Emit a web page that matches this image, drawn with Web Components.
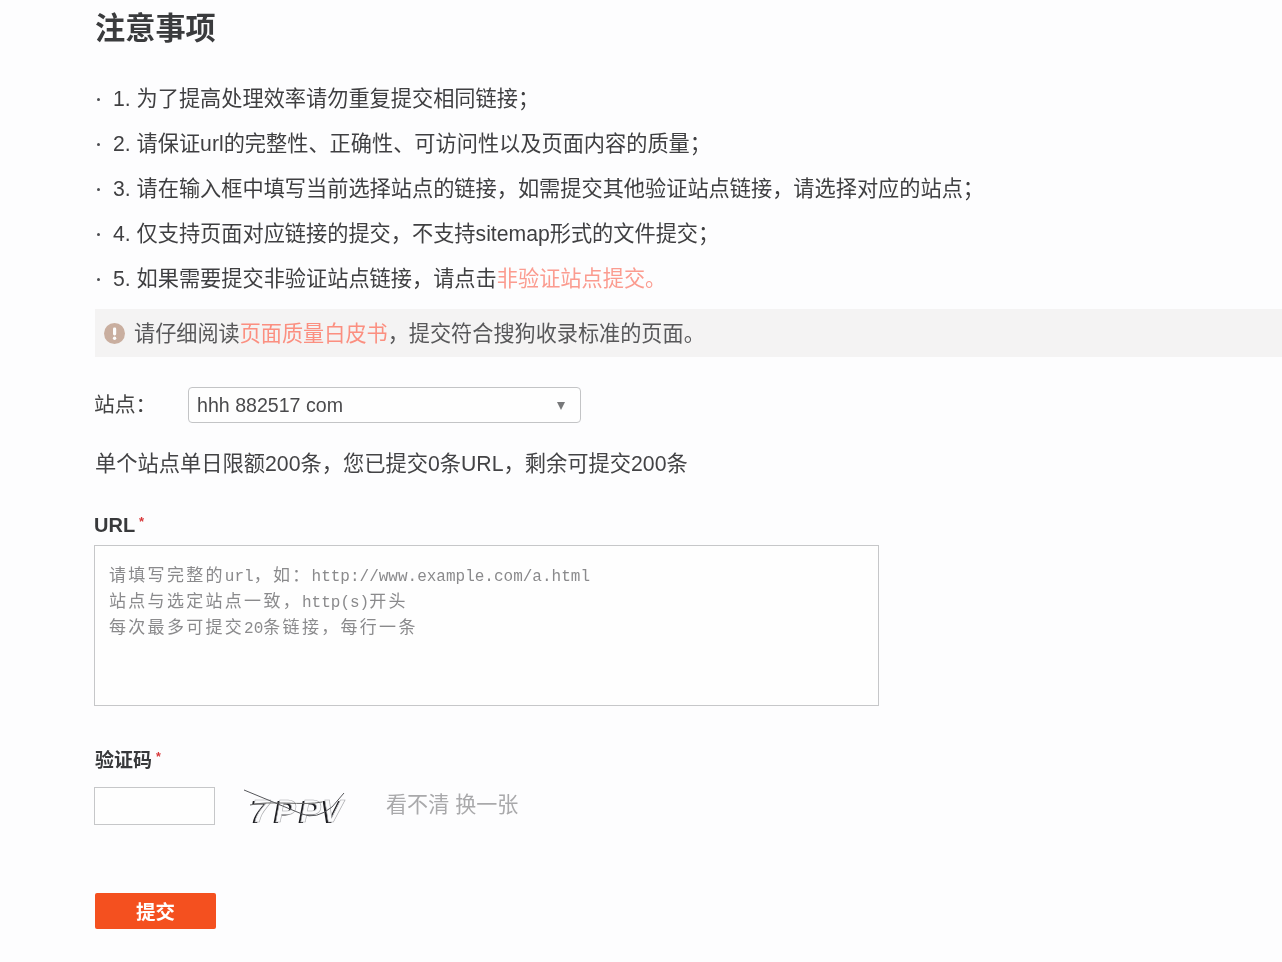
<!DOCTYPE html>
<html lang="zh-CN">
<head>
<meta charset="utf-8">
<title>注意事项</title>
<style>
html,body{margin:0;padding:0;background:#fdfdfe;}
body{font-family:"Liberation Sans","Noto Sans CJK SC",sans-serif;color:#3d3d3f;overflow:hidden;height:962px;}
</style>
</head>
<body>
<notice-page></notice-page>

<script>
function def(name, css, html){
  customElements.define(name, class extends HTMLElement{
    constructor(){
      super();
      this.attachShadow({mode:'open'}).innerHTML='<style>'+css+'</style>'+html;
    }
  });
}

def('notice-item',
 `:host{display:flex;align-items:center;height:45px;font-size:21.2px;color:#3f3f41;}
  .dot{width:3px;height:3px;border-radius:50%;background:#4c4d51;margin:5px 13px 0 2px;flex:none;}
  ::slotted(a){color:#fb9c90;text-decoration:none;}`,
 `<span class="dot"></span><span class="t"><slot></slot></span>`);

def('notice-alert',
 `:host{display:flex;align-items:center;height:48px;padding-left:9px;background:#f4f3f3;font-size:21.15px;color:#58585a;}
  svg{flex:none;margin-right:9px;}
  .t{padding-bottom:4px;}
  ::slotted(a){color:#fb8f80;text-decoration:none;}`,
 `<svg width="21" height="21" viewBox="0 0 21 21"><circle cx="10.5" cy="10.5" r="10.5" fill="#c9ae9f"/><rect x="9" y="4.5" width="3.2" height="8" rx="1.4" fill="#fdfdfd"/><circle cx="10.6" cy="15.3" r="1.7" fill="#fdfdfd"/></svg><span class="t"><slot></slot></span>`);

def('site-select',
 `:host{display:flex;align-items:center;height:36px;width:393px;box-sizing:border-box;padding:0 15px 0 8px;border:1px solid #c3c4c6;border-radius:4px;background:#fefefe;font-size:19.6px;color:#4a4a4c;justify-content:space-between;}
  i{width:0;height:0;border-left:4.5px solid transparent;border-right:4.5px solid transparent;border-top:8px solid #77787a;margin-top:2px;}`,
 `<span><slot></slot></span><i></i>`);

def('field-label',
 `:host{display:block;font-weight:700;color:#38393b;}
  b{color:#d8383a;font-size:.65em;position:relative;top:-6px;margin-left:4px;font-weight:700;}`,
 `<slot></slot><b>*</b>`);

def('url-box',
 `:host{display:block;width:785px;height:161px;box-sizing:border-box;border:1px solid #c6c7c9;background:#fefefe;padding:15px 14px;color:#8a8a8c;font-family:"Liberation Mono","Noto Sans CJK SC",monospace;font-size:16px;line-height:26px;white-space:nowrap;}`,
 `<slot></slot>`);

def('captcha-image',
 `:host{display:block;width:106px;height:48px;flex:none;align-self:flex-start;}
  svg{display:block;}`,
 `<svg width="106" height="48" viewBox="0 0 106 48" role="img" aria-label="captcha">
   <g font-family="Liberation Sans,sans-serif" font-style="italic" font-weight="700" font-size="31">
     <g fill="#1e1e22">
       <text x="6" y="36">7</text><text x="29" y="36">P</text><text x="54" y="36">P</text><text x="76" y="36">V</text>
     </g>
     <g fill="#fbfbfc" stroke="#a9aaad" stroke-width=".6" transform="translate(2.2,-.8)">
       <text x="6" y="36">7</text><text x="29" y="36">P</text><text x="54" y="36">P</text><text x="76" y="36">V</text>
     </g>
   </g>
   <path d="M0 3 L58 27 Q72 33 88 20 L100 6" fill="none" stroke="#55565a" stroke-width="1"/>
   <path d="M6 18 C26 13 60 19 78 15" fill="none" stroke="#666" stroke-width="1"/>
 </svg>`);

def('submit-button',
 `:host{display:flex;align-items:center;justify-content:center;width:121px;height:36px;background:#f4501f;border-radius:2px;color:#fff;font-weight:700;font-size:19.5px;}
  span{padding-bottom:2px;}`,
 `<span><slot></slot></span>`);

def('notice-page',
 `:host{display:block;padding-left:94px;height:962px;box-sizing:border-box;filter:blur(.35px);}
  h1{margin:0;height:57px;padding:9px 0 0 1px;box-sizing:border-box;line-height:40px;font-size:30.2px;font-weight:700;color:#3a3b3d;}
  .list{padding-top:17px;padding-left:1px;}
  notice-alert{margin:10px 0 0 1px;}
  .site{display:flex;align-items:center;margin-top:30px;font-size:20.8px;color:#444;}
  .site span{width:94px;flex:none;padding-bottom:4px;}
  .quota{margin-top:23px;height:36px;line-height:36px;font-size:21.25px;color:#434345;padding-left:1px;}
  .url{margin-top:28px;height:30px;line-height:30px;font-size:20px;}
  url-box{margin-top:5px;}
  .code{margin-top:40px;height:30px;line-height:30px;font-size:19px;padding-left:1px;}
  .row{display:flex;align-items:flex-start;margin-top:11px;height:38px;}
  .input{width:121px;height:38px;box-sizing:border-box;border:1px solid #c6c7c9;background:#fefefe;flex:none;margin-right:29px;}
  .links{margin-left:36px;font-size:21.1px;line-height:36px;color:#a9a9ab;white-space:nowrap;}
  submit-button{margin:68px 0 0 1px;}
  .c{font-family:"Noto Sans CJK SC",sans-serif;font-size:17px;letter-spacing:2.3px;}
  .line{display:block;height:26px;}`,
 `<h1>注意事项</h1>
  <div class="list">
    <notice-item>1. 为了提高处理效率请勿重复提交相同链接；</notice-item>
    <notice-item>2. 请保证url的完整性、正确性、可访问性以及页面内容的质量；</notice-item>
    <notice-item>3. 请在输入框中填写当前选择站点的链接，如需提交其他验证站点链接，请选择对应的站点；</notice-item>
    <notice-item>4. 仅支持页面对应链接的提交，不支持sitemap形式的文件提交；</notice-item>
    <notice-item>5. 如果需要提交非验证站点链接，请点击<a href="#">非验证站点提交。</a></notice-item>
  </div>
  <notice-alert>请仔细阅读<a href="#">页面质量白皮书</a>，提交符合搜狗收录标准的页面。</notice-alert>
  <div class="site"><span>站点：</span><site-select>hhh 882517 com</site-select></div>
  <div class="quota">单个站点单日限额200条，您已提交0条URL，剩余可提交200条</div>
  <field-label class="url">URL</field-label>
  <url-box>
    <span class="line"><span class="c">请填写完整的</span>url<span class="c">，如：</span>http://www.example.com/a.html</span>
    <span class="line"><span class="c">站点与选定站点一致，</span>http(s)<span class="c">开头</span></span>
    <span class="line"><span class="c">每次最多可提交</span>20<span class="c">条链接，每行一条</span></span>
  </url-box>
  <field-label class="code">验证码</field-label>
  <div class="row">
    <div class="input"></div>
    <captcha-image></captcha-image>
    <span class="links">看不清 换一张</span>
  </div>
  <submit-button>提交</submit-button>`);
</script>
</body>
</html>
